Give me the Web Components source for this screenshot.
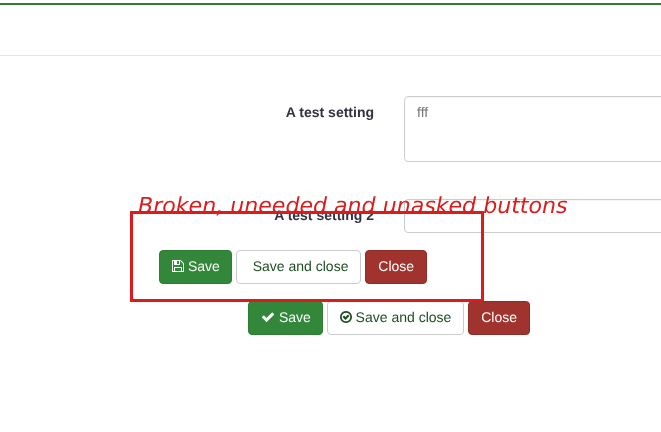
<!DOCTYPE html>
<html>
<head>
<meta charset="utf-8">
<title>Settings</title>
<style>
  html, body { margin: 0; height: 100%; overflow: hidden; background: #fff; }
  body { font: 14px/20px "Liberation Sans", Arial, sans-serif; color: #333; text-rendering: geometricPrecision; }
  settings-form, action-bar, red-annotation { will-change: transform; }
</style>
</head>
<body>
<page-header></page-header>
<settings-form>
  <setting-row label="A test setting" multiline>fff</setting-row>
  <setting-row label="A test setting 2"></setting-row>
</settings-form>
<action-bar>
  <fa-button kind="save" icon="check">Save</fa-button>
  <fa-button kind="plain" icon="check-circle">Save and close</fa-button>
  <fa-button kind="close">Close</fa-button>
</action-bar>
<red-annotation caption="Broken, uneeded and unasked buttons">
  <fa-button kind="save" icon="floppy">Save</fa-button>
  <fa-button kind="plain" wide>Save and close</fa-button>
  <fa-button kind="close">Close</fa-button>
</red-annotation>

<script>
const ICONS = {
  check: { box: "0 0 1792 1792", size: 14, d: "M1671 566q0 40-28 68l-724 724-136 136q-28 28-68 28t-68-28l-136-136-362-362q-28-28-28-68t28-68l136-136q28-28 68-28t68 28l294 295 656-657q28-28 68-28t68 28l136 136q28 28 28 68z" },
  "check-circle": { box: "128 128 1536 1536", size: 12, d: "M1299 813l-422 422q-19 19-45 19t-45-19l-294-294q-19-19-19-45t19-45l102-102q19-19 45-19t45 19l147 147 275-275q19-19 45-19t45 19l102 102q19 19 19 45t-19 45zm141 83q0-148-73-273t-198-198-273-73-273 73-198 198-73 273 73 273 198 198 273 73 273-73 198-198 73-273zm224 0q0 209-103 385.500t-279.500 279.500-385.500 103-385.500-103-279.500-279.500-103-385.500 103-385.500 279.500-279.500 385.500-103 385.500 103 279.500 279.500 103 385.500z" },
  floppy: { box: "128 128 1536 1536", size: 12, d: "M512 1536h768v-384h-768v384zm896 0h128v-896q0-14-10-38.500t-20-34.500l-281-281q-10-10-34-20t-39-10v416q0 40-28 68t-68 28h-576q-40 0-68-28t-28-68v-416h-128v1280h128v-416q0-40 28-68t68-28h832q40 0 68 28t28 68v416zm-384-928v-320q0-13-9.500-22.500t-22.500-9.500h-192q-13 0-22.500 9.500t-9.500 22.500v320q0 13 9.500 22.500t22.500 9.500h192q13 0 22.500-9.500t9.500-22.500zm640 32v928q0 40-28 68t-68 28h-1344q-40 0-68-28t-28-68v-1344q0-40 28-68t68-28h928q40 0 88 20t76 48l280 280q28 28 48 76t20 88z" }
};

function shadow(el, html) {
  const template = document.createElement("template");
  template.innerHTML = html;
  el.attachShadow({ mode: "open" }).appendChild(template.content.cloneNode(true));
}

class PageHeader extends HTMLElement {
  constructor() {
    super();
    shadow(this, `
<style>
  :host {
    display: block;
    box-sizing: border-box;
    height: 56px;
    padding-top: 3px;
    border-bottom: 1px solid #e5e5e5;
  }
  div { height: 2px; background: #2e7d32; }
</style>
<div></div>`);
  }
}

class SettingsForm extends HTMLElement {
  constructor() {
    super();
    shadow(this, `
<style>
  :host {
    display: flex;
    flex-direction: column;
    gap: 37px;
    padding-top: 40px;
    overflow: hidden;
  }
</style>
<slot></slot>`);
  }
}

class SettingRow extends HTMLElement {
  constructor() {
    super();
    shadow(this, `
<style>
  :host {
    display: grid;
    grid-template-columns: 374px 400px;
    column-gap: 30px;
    align-items: start;
  }
  label {
    padding-top: 6px;
    text-align: right;
    font-weight: bold;
    color: #333340;
  }
  .field {
    box-sizing: border-box;
    height: 34px;
    padding: 5px 12px;
    border: 1px solid #ccc;
    border-radius: 4px;
    color: #777;
    box-shadow: inset 0 1px 1px rgba(0, 0, 0, .04);
  }
  :host([multiline]) .field { height: 66px; }
</style>
<label></label>
<div class="field"><slot></slot></div>`);
    this.shadowRoot.querySelector("label").textContent = this.getAttribute("label");
  }
}

class ActionBar extends HTMLElement {
  constructor() {
    super();
    shadow(this, `
<style>
  :host {
    display: flex;
    gap: 3.9px;
    padding: 68px 0 0 248px;
  }
</style>
<slot></slot>`);
  }
}

class FaButton extends HTMLElement {
  constructor() {
    super();
    const icon = ICONS[this.getAttribute("icon")];
    shadow(this, `
<style>
  :host {
    display: inline-flex;
    align-items: center;
    gap: 3.9px;
    box-sizing: border-box;
    height: 34px;
    padding: 0 12px 2px;
    border: 1px solid transparent;
    border-radius: 4px;
    font-size: 14px;
    white-space: nowrap;
  }
  :host([kind="save"]) { background: #33873a; border-color: #2e7d32; color: #fff; padding-right: 11px; }
  :host([kind="plain"]) { background: #fff; border-color: #ccc; color: #1b4d20; }
  :host([kind="close"]) { background: #a0332e; border-color: #8f2d29; color: #fff; padding-right: 11.5px; }
  :host([wide]) { padding-left: 16px; }
  svg { fill: currentColor; flex: none; }
</style>
${icon ? `<svg width="${icon.size}" height="${icon.size}" viewBox="${icon.box}"><path d="${icon.d}"/></svg>` : ""}
<slot></slot>`);
  }
}

// hand drawn markup on top of the screenshot, so it really does float over the page
class RedAnnotation extends HTMLElement {
  constructor() {
    super();
    shadow(this, `
<style>
  :host {
    position: absolute;
    left: 130px;
    top: 211px;
    box-sizing: border-box;
    width: 354px;
    height: 91px;
    border: 3px solid #dc1c1c;
    display: flex;
    align-items: flex-start;
    gap: 3.9px;
    padding: 36px 0 0 26px;
  }
  span {
    position: absolute;
    left: 5px;
    top: -23px;
    font: italic 22.1px/30px "DejaVu Sans", sans-serif;
    color: #dc1c1c;
    white-space: nowrap;
  }
</style>
<span></span>
<slot></slot>`);
    this.shadowRoot.querySelector("span").textContent = this.getAttribute("caption");
  }
}

customElements.define("page-header", PageHeader);
customElements.define("settings-form", SettingsForm);
customElements.define("setting-row", SettingRow);
customElements.define("action-bar", ActionBar);
customElements.define("fa-button", FaButton);
customElements.define("red-annotation", RedAnnotation);
</script>
</body>
</html>
